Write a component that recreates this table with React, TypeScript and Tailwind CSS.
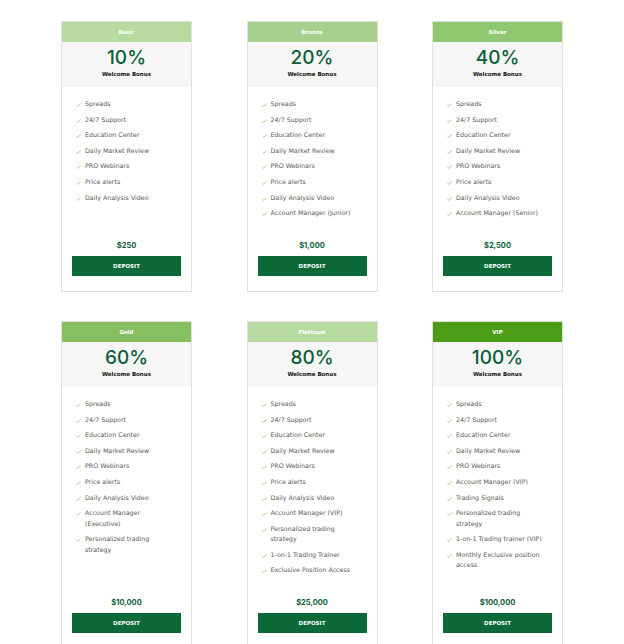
import React from "react";

type Plan = {
  name: string;
  pct: string;
  header: string;
  price: string;
  features: string[];
};

const plans: Plan[] = [
  {
    name: "Basic",
    pct: "10%",
    header: "bg-[#b6da9f]",
    price: "$250",
    features: ["Spreads", "24/7 Support", "Education Center", "Daily Market Review", "PRO Webinars", "Price alerts", "Daily Analysis Video"],
  },
  {
    name: "Bronze",
    pct: "20%",
    header: "bg-[#a6d08b]",
    price: "$1,000",
    features: ["Spreads", "24/7 Support", "Education Center", "Daily Market Review", "PRO Webinars", "Price alerts", "Daily Analysis Video", "Account Manager (Junior)"],
  },
  {
    name: "Silver",
    pct: "40%",
    header: "bg-[#92c772]",
    price: "$2,500",
    features: ["Spreads", "24/7 Support", "Education Center", "Daily Market Review", "PRO Webinars", "Price alerts", "Daily Analysis Video", "Account Manager (Senior)"],
  },
  {
    name: "Gold",
    pct: "60%",
    header: "bg-[#86bf60]",
    price: "$10,000",
    features: ["Spreads", "24/7 Support", "Education Center", "Daily Market Review", "PRO Webinars", "Price alerts", "Daily Analysis Video", "Account Manager (Executive)", "Personalized trading strategy"],
  },
  {
    name: "Platinum",
    pct: "80%",
    header: "bg-[#b6da9f]",
    price: "$25,000",
    features: ["Spreads", "24/7 Support", "Education Center", "Daily Market Review", "PRO Webinars", "Price alerts", "Daily Analysis Video", "Account Manager (VIP)", "Personalized trading strategy", "1-on-1 Trading Trainer", "Exclusive Position Access"],
  },
  {
    name: "VIP",
    pct: "100%",
    header: "bg-[#4c9e18]",
    price: "$100,000",
    features: ["Spreads", "24/7 Support", "Education Center", "Daily Market Review", "PRO Webinars", "Account Manager (VIP)", "Trading Signals", "Personalized trading strategy", "1-on-1 Trading trainer (VIP)", "Monthly Exclusive position access"],
  },
];

const wide = { fontFamily: "'DejaVu Sans', Verdana, sans-serif" };

function Check() {
  return (
    <svg width="5" height="4" viewBox="0 0 5 4" className="mt-[4px] shrink-0">
      <path d="M0.4 2.1 L1.8 3.4 L4.6 0.5" fill="none" stroke="#8cc063" strokeWidth="0.8" />
    </svg>
  );
}

function Card({ p }: { p: Plan }) {
  return (
    <div className="flex min-h-[271px] flex-col border border-[#e0e0e0] bg-white">
      <div className={`flex h-[20px] items-center justify-center text-[5.5px] font-bold text-white ${p.header}`} style={wide}>
        {p.name}
      </div>
      <div className="flex h-[45px] flex-col items-center bg-[#f6f6f6] pt-[6px]">
        <div className="text-[19px] font-medium leading-[20px] text-[#0b5e37]">{p.pct}</div>
        <div className="mt-[3px] text-[5.5px] font-bold leading-[7px] text-[#111]" style={wide}>
          Welcome Bonus
        </div>
      </div>
      <ul className="flex flex-col gap-[5.1px] pl-[14px] pr-[8px] pt-[12px] pb-[22px]">
        {p.features.map((f) => (
          <li key={f} className="flex gap-[4px]">
            <Check />
            <span className="w-[90px] text-[6.3px] leading-[10.5px] text-[#585858]" style={wide}>
              {f}
            </span>
          </li>
        ))}
      </ul>
      <div className="mt-auto flex flex-col items-center px-[10px] pb-[15px]">
        <div className="text-[7.5px] font-bold leading-[10px] text-[#0b5e37]">{p.price}</div>
        <button className="mt-[5px] flex h-[20px] w-full items-center justify-center bg-[#0b6a38] text-[5.5px] font-bold text-white" style={wide}>
          DEPOSIT
        </button>
      </div>
    </div>
  );
}

export default function App() {
  return (
    <div className="h-[644px] w-[624px] overflow-hidden bg-white" style={{ fontFamily: "Inter, 'Noto Sans', sans-serif" }}>
      <div className="grid grid-cols-[131px_131px_131px] gap-x-[54.5px] gap-y-[29px] pl-[61px] pt-[21px]">
        {plans.map((p) => (
          <Card key={p.name} p={p} />
        ))}
      </div>
    </div>
  );
}
